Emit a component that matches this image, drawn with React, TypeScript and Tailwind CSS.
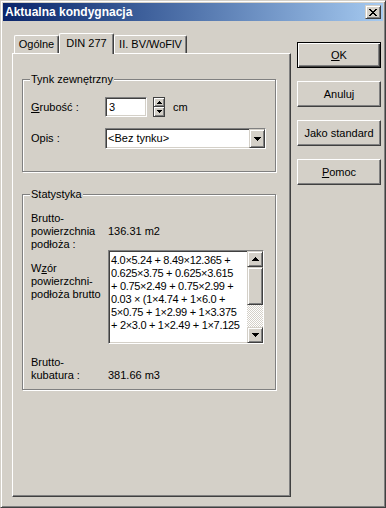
import type { ReactNode } from 'react';

const raised =
  'border border-t-white border-l-white border-b-[#404040] border-r-[#404040] shadow-[inset_-1px_-1px_0_#808080]';
const sunken =
  'border border-t-[#808080] border-l-[#808080] border-b-white border-r-white shadow-[inset_1px_1px_0_#404040,inset_-1px_-1px_0_#d4d0c8]';
const scrollBtn =
  'border border-t-[#d4d0c8] border-l-[#d4d0c8] border-b-[#404040] border-r-[#404040] shadow-[inset_1px_1px_0_#fff,inset_-1px_-1px_0_#808080]';

const closeGlyph = [
  'XX....XX',
  '.XX..XX.',
  '..XXXX..',
  '...XX...',
  '..XXXX..',
  '.XX..XX.',
  'XX....XX',
];

function CloseIcon() {
  return (
    <svg width="8" height="7" viewBox="0 0 8 7" shapeRendering="crispEdges">
      {closeGlyph.flatMap((row, y) =>
        row.split('').map((c, x) => (c === 'X' ? <rect key={`${x}-${y}`} x={x} y={y} width="1" height="1" fill="#000" /> : null))
      )}
    </svg>
  );
}

function Tri({ up, w = 7, h = 4 }: { up?: boolean; w?: number; h?: number }) {
  return (
    <svg width={w} height={h} viewBox={`0 0 ${w} ${h}`} shapeRendering="crispEdges">
      <path d={up ? `M${w / 2} 0L${w} ${h}H0Z` : `M0 0H${w}L${w / 2} ${h}Z`} fill="#000" />
    </svg>
  );
}

function Group({ label, className, children }: { label: string; className: string; children: ReactNode }) {
  return (
    <div className={'relative border border-[#808080] shadow-[inset_1px_1px_0_#fff,1px_1px_0_#fff] ' + className}>
      <span className="absolute left-[7px] -top-[7px] bg-[#d4d0c8] px-[1px] leading-[13px]">{label}</span>
      {children}
    </div>
  );
}

const formula = [
  '4.0×5.24 + 8.49×12.365 +',
  '0.625×3.75 + 0.625×3.615',
  '+ 0.75×2.49 + 0.75×2.99 +',
  '0.03 × (1×4.74 + 1×6.0 +',
  '5×0.75 + 1×2.99 + 1×3.375',
  '+ 2×3.0 + 1×2.49 + 1×7.125',
];

export default function App() {
  return (
    <div className="w-[386px] h-[508px] bg-[#d4d0c8] border border-t-[#d4d0c8] border-l-[#d4d0c8] border-b-[#404040] border-r-[#404040] shadow-[inset_1px_1px_0_#fff,inset_-1px_-1px_0_#808080] p-[2px] text-[11px] leading-[13px] text-black font-['Liberation_Sans',Arial,sans-serif] select-none">
      {/* title bar */}
      <div className="h-[18px] flex items-center justify-between bg-gradient-to-r from-[#0a246a] to-[#a6caf0] pl-[2px]">
        <span className="text-white font-bold text-[12px]">Aktualna kondygnacja</span>
        <div className={'w-[16px] h-[14px] mr-[2px] flex items-center justify-center bg-[#d4d0c8] ' + scrollBtn}>
          <CloseIcon />
        </div>
      </div>

      <div className="flex">
        {/* tabs + page */}
        <div className="ml-[9px] mt-[12px] w-[279px]">
          <div className="h-[20px] flex items-end pl-[2px]">
            <div className="w-[45px] h-[18px] flex items-center justify-center border-t border-l border-t-white border-l-white border-r border-r-[#404040] shadow-[inset_-1px_0_0_#808080] rounded-t-[2px]">
              Ogólne
            </div>
            <div className="relative z-10 w-[55px] h-[21px] -mb-[1px] pb-[2px] flex items-center justify-center bg-[#d4d0c8] border-t border-l border-t-white border-l-white border-r border-r-[#404040] shadow-[inset_-1px_0_0_#808080] rounded-t-[2px]">
              DIN 277
            </div>
            <div className="w-[73px] h-[18px] flex items-center justify-center border-t border-l border-t-white border-l-white border-r border-r-[#404040] shadow-[inset_-1px_0_0_#808080] rounded-t-[2px]">
              II. BV/WoFlV
            </div>
          </div>

          <div className="h-[444px] border border-t-white border-l-white border-b-[#404040] border-r-[#404040] shadow-[inset_-1px_-1px_0_#808080] pl-[9px] pt-[25px]">
            <Group label="Tynk zewnętrzny" className="w-[254px] h-[93px] pt-[17px] pl-[8px]">
              <div className="flex items-center h-[20px]">
                <span className="w-[74px]">
                  <span className="underline">G</span>rubość :
                </span>
                <div className={'w-[42px] h-[20px] bg-white flex items-center pl-[3px] ' + sunken}>3</div>
                <div className="ml-[6px] w-[12px] h-[20px] flex flex-col border border-[#404040]">
                  <div className="h-[9px] flex items-center justify-center border-b border-[#404040] shadow-[inset_1px_1px_0_#fff,inset_-1px_-1px_0_#808080]">
                    <Tri up w={5} h={3} />
                  </div>
                  <div className="flex-1 flex items-center justify-center shadow-[inset_1px_1px_0_#fff,inset_-1px_-1px_0_#808080]">
                    <Tri w={5} h={3} />
                  </div>
                </div>
                <span className="ml-[8px]">cm</span>
              </div>
              <div className="flex items-center mt-[11px]">
                <span className="w-[74px]">Opis :</span>
                <div className={'w-[161px] h-[21px] bg-white flex ' + sunken}>
                  <span className="flex-1 flex items-center pl-[2px]">&lt;Bez tynku&gt;</span>
                  <div className={'w-[16px] flex items-center justify-center bg-[#d4d0c8] ' + scrollBtn}>
                    <Tri />
                  </div>
                </div>
              </div>
            </Group>

            <Group label="Statystyka" className="mt-[22px] w-[254px] h-[196px] pt-[17px] pl-[8px]">
              <div className="flex items-center">
                <div className="w-[77px]">
                  Brutto-
                  <br />
                  powierzchnia
                  <br />
                  podłoża :
                </div>
                <span>136.31 m2</span>
              </div>
              <div className="flex -mt-[1px]">
                <div className="w-[77px] pt-[12px]">
                  W<span className="underline">z</span>ór
                  <br />
                  powierzchni-
                  <br />
                  podłoża brutto
                </div>
                <div className={'w-[156px] h-[94px] bg-white flex ' + sunken}>
                  <div className="flex-1 overflow-hidden pl-[2px] pt-[3px] tracking-[-0.3px] whitespace-pre">
                    {formula.map((l) => (
                      <div key={l}>{l}</div>
                    ))}
                  </div>
                  <div className="w-[16px] flex flex-col">
                    <div className={'h-[16px] flex items-center justify-center bg-[#d4d0c8] ' + scrollBtn}>
                      <Tri up />
                    </div>
                    <div className={'h-[38px] bg-[#d4d0c8] ' + scrollBtn} />
                    <div className="flex-1 bg-[repeating-conic-gradient(#fff_0_25%,#d4d0c8_0_50%)] bg-[length:2px_2px]" />
                    <div className={'h-[16px] flex items-center justify-center bg-[#d4d0c8] ' + scrollBtn}>
                      <Tri />
                    </div>
                  </div>
                </div>
              </div>
              <div className="flex mt-[12px]">
                <div className="w-[77px]">
                  Brutto-
                  <br />
                  kubatura :
                </div>
                <span className="pt-[13px]">381.66 m3</span>
              </div>
            </Group>
          </div>
        </div>

        {/* buttons */}
        <div className="ml-[6px] mt-[21px] flex flex-col gap-[13px]">
          <div className="w-[84px] h-[26px] border border-black shadow-[inset_1px_1px_0_#fff,inset_-1px_-1px_0_#404040,inset_-2px_-2px_0_#808080] flex items-center justify-center">
            <span>
              <span className="underline">O</span>K
            </span>
          </div>
          <div className={'w-[84px] h-[26px] flex items-center justify-center ' + raised}>Anuluj</div>
          <div className={'w-[84px] h-[26px] flex items-center justify-center ' + raised}>Jako standard</div>
          <div className={'w-[84px] h-[26px] flex items-center justify-center ' + raised}>
            <span>
              <span className="underline">P</span>omoc
            </span>
          </div>
        </div>
      </div>
    </div>
  );
}
